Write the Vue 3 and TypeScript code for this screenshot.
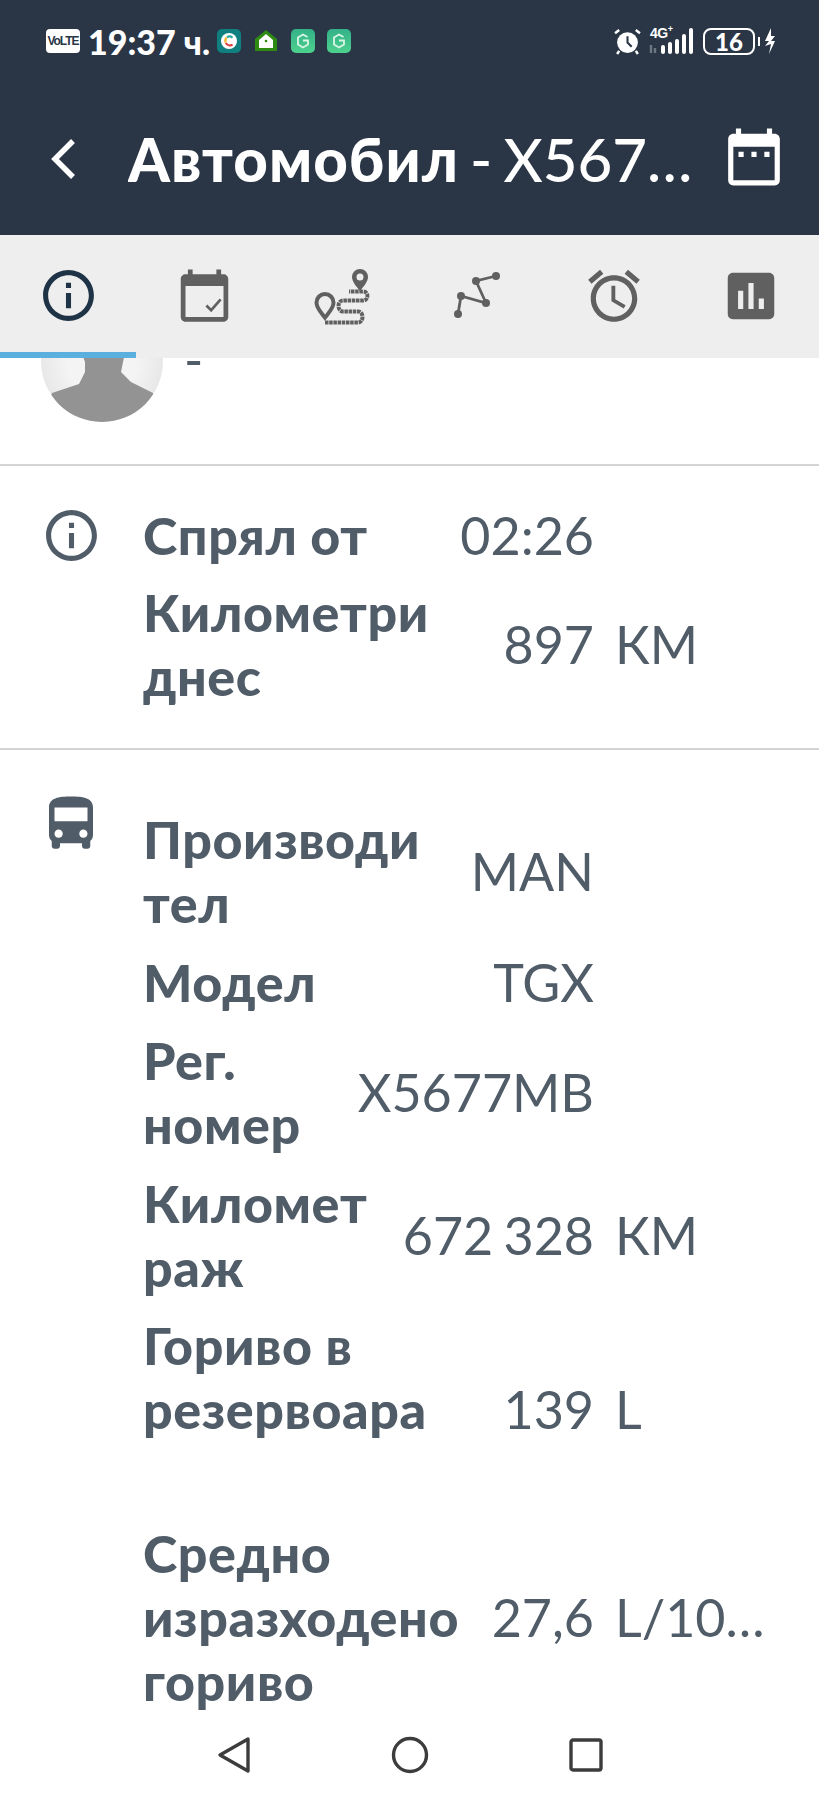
<script setup lang="ts">
type Row = { label: string[]; value: string; unit?: string; far?: boolean; low?: boolean }

const trip: Row[] = [
  { label: ['Спрял от'], value: '02:26' },
  { label: ['Километри', 'днес'], value: '897', unit: 'КМ' }
]

const vehicle: Row[] = [
  { label: ['Производи', 'тел'], value: 'MAN' },
  { label: ['Модел'], value: 'TGX' },
  { label: ['Рег.', 'номер'], value: 'X5677MB' },
  { label: ['Километ', 'раж'], value: '672 328', unit: 'КМ' },
  { label: ['Гориво в', 'резервоара'], value: '139', unit: 'L', low: true },
  { label: ['Средно', 'изразходено', 'гориво'], value: '27,6', unit: 'L/100km', far: true }
]

const sections = [
  { id: 'trip', rows: trip },
  { id: 'vehicle', rows: vehicle }
]
</script>

<template>
  <div class="page">
    <div class="statusbar">
      <span class="volte">VoLTE</span>
      <span class="time">19:37 ч.</span>
      <span class="app app-teal">
        <svg viewBox="0 0 24 24" width="24" height="24">
          <circle cx="12" cy="12" r="8" fill="#fff" />
          <path d="M15.5 8.6a5 5 0 0 0-5.5-.4" fill="none" stroke="#2aa9a0" stroke-width="2.2" />
          <path d="M9.6 8.6a5 5 0 0 0-1 5" fill="none" stroke="#f2b632" stroke-width="2.2" />
          <path d="M8.8 14a5 5 0 0 0 6.8 1.6" fill="none" stroke="#d8403f" stroke-width="2.2" />
        </svg>
      </span>
      <svg class="app-home" viewBox="0 0 24 24" width="24" height="24">
        <path d="M12 1 23 10v12H1V10z" fill="#2f8a12" />
        <path d="M12 5 19 11v8H5v-8z" fill="#fff" />
        <circle cx="12" cy="12" r="1.3" fill="#2f8a12" />
      </svg>
      <span class="app app-green">
        <svg viewBox="0 0 24 24" width="24" height="24">
          <path d="M16.5 8 12 5.500 7 8.500v7l5 3 5-3v-4h-5" fill="none" stroke="#d8f5e6" stroke-width="1.800" />
        </svg>
      </span>
      <span class="app app-green">
        <svg viewBox="0 0 24 24" width="24" height="24">
          <path d="M16.5 8 12 5.500 7 8.500v7l5 3 5-3v-4h-5" fill="none" stroke="#d8f5e6" stroke-width="1.800" />
        </svg>
      </span>
      <span class="grow"></span>
      <svg class="alarm" viewBox="0 0 26 26" width="27" height="27">
        <circle cx="13" cy="14" r="10" fill="#fff" />
        <path d="M13 8v6l4 4" fill="none" stroke="#2a3646" stroke-width="2" />
        <path d="M1 5l4-3M25 5l-4-3M5 22l-2 3M21 22l2 3" stroke="#fff" stroke-width="2.4" fill="none" />
      </svg>
      <span class="signal">
        <span class="net">4G<sup>+</sup></span>
        <svg viewBox="0 0 48 26" width="48" height="26">
          <path d="M4 17v8M8 20v5" stroke="#6d7883" stroke-width="2.4" fill="none" />
          <rect x="14" y="17" width="4" height="9" rx="2" fill="#fff" />
          <rect x="21" y="14" width="4" height="12" rx="2" fill="#fff" />
          <rect x="28" y="11" width="4" height="15" rx="2" fill="#fff" />
          <rect x="35" y="6" width="4" height="20" rx="2" fill="#fff" />
          <rect x="42" y="0" width="4" height="26" rx="2" fill="#fff" />
        </svg>
      </span>
      <span class="battery">16</span>
      <span class="nub"></span>
      <svg class="bolt" viewBox="0 0 12 26" width="12" height="26">
        <path d="M7 0 1 13h4l-4 5 6-2-2 10 6-13H7l4-5H7z" fill="#fff" />
      </svg>
    </div>

    <header class="appbar">
      <svg class="back" viewBox="0 0 26 42" width="26" height="42">
        <path d="M23 3 5 21l18 18" fill="none" stroke="#fff" stroke-width="5.5" />
      </svg>
      <h1 class="title"><span class="title-word">Автомобил</span> - X5677MB</h1>
      <svg class="cal" viewBox="0 0 24 24" width="62" height="62">
        <path fill="#fff" d="M20 3h-1V1h-2v2H7V1H5v2H4c-1.1 0-2 .9-2 2v16c0 1.1.9 2 2 2h16c1.1 0 2-.9 2-2V5c0-1.1-.9-2-2-2zm0 18H4V8h16v13z" />
        <path fill="#fff" d="M6 10h2v2H6zM11 10h2v2h-2zM16 10h2v2h-2z" />
      </svg>
    </header>

    <nav class="tabs">
      <div class="tab tab-active">
        <svg viewBox="0 0 24 24" width="61" height="61">
          <path d="M11 7h2v2h-2zm0 4h2v6h-2zm1-9C6.48 2 2 6.48 2 12s4.48 10 10 10 10-4.48 10-10S17.52 2 12 2zm0 18c-4.41 0-8-3.59-8-8s3.59-8 8-8 8 3.59 8 8-3.59 8-8 8z" />
        </svg>
      </div>
      <div class="tab">
        <svg viewBox="0 0 24 24" width="57" height="57">
          <path d="M20 3h-1V1h-2v2H7V1H5v2H4c-1.1 0-2 .9-2 2v16c0 1.1.9 2 2 2h16c1.1 0 2-.9 2-2V5c0-1.1-.9-2-2-2zm0 18H4V8h16v13z" />
          <path d="m12.8 16.2 2 2 4-4.6" fill="none" stroke="#606060" stroke-width="1.1" />
        </svg>
      </div>
      <div class="tab">
        <svg viewBox="0 0 61 61" width="61" height="61">
          <path fill-rule="evenodd" d="M49 4a8 8 0 0 0-8 8c0 5 5 10 8 14 3-4 8-9 8-14a8 8 0 0 0-8-8zm0 4.500a3.500 3.500 0 1 1 0 7 3.500 3.500 0 0 1 0-7zM14 27a10.500 10.500 0 0 0-10.500 10.500c0 6 6.500 13 10.500 18.500 4-5.500 10.500-12.500 10.500-18.500A10.500 10.500 0 0 0 14 27zm0 4a6.500 6.500 0 0 1 6.500 6.500c0 4-3.500 8-6.500 12-3-4-6.500-8-6.500-12a6.500 6.500 0 0 1 6.500-6.500z" />
          <path d="M14 57.500h33c6 0 6-11 0-11H32c-6 0-6-11 0-11h20c6 0 6-9 0-9H38" fill="none" stroke="#606060" stroke-width="4" stroke-dasharray="3.500 .7" />
        </svg>
      </div>
      <div class="tab">
        <svg viewBox="0 0 48 48" width="48" height="48">
          <path d="M4 42 7 24l25 7-10-22 20-5" fill="none" stroke="#606060" stroke-width="2.800" />
          <circle cx="4" cy="42" r="4" />
          <circle cx="7" cy="24" r="4" />
          <circle cx="32" cy="31" r="4" />
          <circle cx="22" cy="9" r="4" />
          <circle cx="42" cy="4" r="4" />
        </svg>
      </div>
      <div class="tab">
        <svg viewBox="0 0 24 24" width="62" height="62">
          <path d="M22 5.720l-4.600-3.860-1.290 1.530 4.600 3.860L22 5.720zM7.880 3.390L6.600 1.860 2 5.710l1.290 1.530 4.590-3.850zM12.500 8H11v6l4.750 2.850.75-1.230-4-2.370V8zM12 4c-4.970 0-9 4.030-9 9s4.030 9 9 9 9-4.030 9-9-4.030-9-9-9zm0 16c-3.870 0-7-3.130-7-7s3.130-7 7-7 7 3.130 7 7-3.130 7-7 7z" />
        </svg>
      </div>
      <div class="tab">
        <svg viewBox="0 0 24 24" width="62" height="62">
          <path d="M19 3H5c-1.100 0-2 .9-2 2v14c0 1.100.9 2 2 2h14c1.100 0 2-.9 2-2V5c0-1.100-.9-2-2-2zM9 17H7v-7h2v7zm4 0h-2V7h2v10zm4 0h-2v-4h2v4z" />
        </svg>
      </div>
      <span class="tab-ink"></span>
    </nav>

    <main class="content">
      <div class="driver">
        <div class="avatar">
          <svg viewBox="0 0 122 122" width="122" height="122">
            <path d="M36 40h51l-5 22-2 10 10 10 22 11 10 29H0l11-29 27-9 6-12v-10z" fill="#939393" />
          </svg>
        </div>
        <span class="driver-name">-</span>
      </div>

      <section v-for="section in sections" :key="section.id" :class="['section', 'section-' + section.id]">
        <div class="section-icon">
          <svg v-if="section.id === 'trip'" viewBox="0 0 24 24" width="61" height="61">
            <path d="M11 7h2v2h-2zm0 4h2v6h-2zm1-9C6.48 2 2 6.48 2 12s4.48 10 10 10 10-4.48 10-10S17.52 2 12 2zm0 18c-4.41 0-8-3.59-8-8s3.59-8 8-8 8 3.59 8 8-3.59 8-8 8z" />
          </svg>
          <svg v-else viewBox="0 0 24 24" width="66" height="66">
            <path d="M4 16c0 .88.39 1.670 1 2.220V20c0 .55.45 1 1 1h1c.55 0 1-.45 1-1v-1h8v1c0 .55.45 1 1 1h1c.55 0 1-.45 1-1v-1.780c.61-.55 1-1.340 1-2.220V6c0-3.500-3.580-4-8-4s-8 .5-8 4v10zm3.500 1c-.83 0-1.500-.67-1.500-1.500S6.670 14 7.500 14s1.500.67 1.500 1.500S8.330 17 7.500 17zm9 0c-.83 0-1.500-.67-1.500-1.500s.67-1.500 1.500-1.500 1.500.67 1.500 1.500-.67 1.500-1.500 1.500zm1.500-6H6V6h12v5z" />
          </svg>
        </div>
        <div class="rows">
          <div v-for="row in section.rows" :key="row.value" :class="['row', { 'row-far': row.far, 'row-low': row.low }]">
            <div class="label">
              <div v-for="line in row.label" :key="line">{{ line }}</div>
            </div>
            <div class="value">{{ row.value }}</div>
            <div class="unit">{{ row.unit }}</div>
          </div>
        </div>
      </section>
    </main>

    <footer class="navbar">
      <svg viewBox="0 0 34 38" width="34" height="38">
        <path d="M31 3 3 19l28 16z" fill="none" stroke="#3c3c3c" stroke-width="3.400" stroke-linejoin="round" />
      </svg>
      <svg viewBox="0 0 38 38" width="38" height="38">
        <circle cx="19" cy="19" r="16.500" fill="none" stroke="#3c3c3c" stroke-width="3.400" />
      </svg>
      <svg viewBox="0 0 34 34" width="34" height="34">
        <rect x="2" y="2" width="30" height="30" rx="2" fill="none" stroke="#3c3c3c" stroke-width="3.400" />
      </svg>
    </footer>
  </div>
</template>

<style>
body {
  margin: 0;
  background: #fff;
}
</style>

<style scoped>
.page {
  width: 819px;
  height: 1800px;
  display: flex;
  flex-direction: column;
  overflow: hidden;
  font-family: Lato, "Open Sans", "Noto Sans", sans-serif;
  color: #505c68;
  background: #fff;
}

.statusbar {
  height: 82px;
  flex: none;
  display: flex;
  align-items: center;
  padding: 0 43px 0 46px;
  background: #2a3646;
  color: #fff;
  box-sizing: border-box;
}

.volte {
  width: 34px;
  height: 24px;
  border-radius: 4px;
  background: #fff;
  color: #2a3646;
  font: 700 12px/24px "Liberation Sans", sans-serif;
  letter-spacing: -1px;
  text-align: center;
  overflow: hidden;
}

.time {
  margin-left: 8px;
  font-size: 34px;
  font-weight: 900;
  white-space: nowrap;
  width: 119px;
}

.app {
  width: 24px;
  height: 24px;
  border-radius: 5px;
  margin-left: 12px;
  display: block;
}

.app-teal {
  margin-left: 10px;
  background: #0f7f7f;
}

.app-green {
  background: linear-gradient(#33b189, #4dd18d);
}

.app-home {
  margin-left: 13px;
  margin-right: 1px;
}

.grow {
  flex: 1;
}

.signal {
  position: relative;
  margin-left: 6px;
  height: 26px;
  display: block;
}

.signal svg {
  display: block;
}

.net {
  position: absolute;
  left: 3px;
  top: -3px;
  font: 700 14px/16px "Liberation Sans", sans-serif;
  letter-spacing: -.5px;
}

.net sup {
  font-size: 9px;
  line-height: 0;
}

.battery {
  margin-left: 8px;
  width: 52px;
  height: 27px;
  box-sizing: border-box;
  border: 2px solid #fff;
  border-radius: 8px;
  font-size: 24px;
  line-height: 23px;
  font-weight: 900;
  text-align: center;
}

.nub {
  width: 2px;
  height: 9px;
  background: #fff;
  margin-left: 3px;
}

.bolt {
  margin-left: 4px;
}

.appbar {
  height: 153px;
  flex: none;
  display: flex;
  align-items: center;
  padding: 0 34px 0 50px;
  background: #2a3646;
  box-sizing: border-box;
}

.back {
  flex: none;
}

.title {
  flex: 1;
  min-width: 0;
  margin: 0 0 0 52px;
  color: #fff;
  font-size: 60px;
  font-weight: 500;
  word-spacing: -4px;
  white-space: nowrap;
  overflow: hidden;
  text-overflow: ellipsis;
}

.title-word {
  font-weight: 900;
  letter-spacing: 1px;
}

.cal {
  flex: none;
  margin: -4px 0 0 24px;
}

.tabs {
  position: relative;
  z-index: 1;
  height: 123px;
  flex: none;
  display: flex;
  background: #eee;
}

.tab {
  flex: 1;
  display: flex;
  align-items: center;
  justify-content: center;
  padding-bottom: 2px;
  fill: #606060;
}

.tab-active {
  fill: #1f3347;
}

.tab-ink {
  position: absolute;
  left: 0;
  bottom: 0;
  width: 136px;
  height: 6px;
  background: #5ab0dc;
}

.content {
  flex: 1;
  min-height: 0;
  overflow: hidden;
}

.driver {
  display: flex;
  gap: 21px;
  height: 106px;
  padding-left: 41px;
  align-items: flex-start;
}

.avatar {
  flex: none;
  width: 122px;
  height: 122px;
  margin-top: -58px;
  border-radius: 50%;
  overflow: hidden;
  background: radial-gradient(circle, #f4f4f4 40%, #dcdcdc 100%);
}

.avatar svg {
  display: block;
}

.driver-name {
  font-size: 52px;
  line-height: 2px;
}

.section {
  display: flex;
  border-top: 2px solid #d4d4d4;
  padding-top: 37px;
  padding-bottom: 40px;
}

.section-vehicle {
  padding-top: 57px;
}

.section-icon {
  flex: none;
  width: 143px;
  box-sizing: border-box;
  padding-left: 41px;
  fill: #505c68;
}

.section-trip .section-icon {
  padding-top: 2px;
}

.section-vehicle .section-icon {
  padding-left: 38px;
  margin-top: -16px;
}

.rows {
  flex: 1;
  min-width: 0;
  display: flex;
  flex-direction: column;
  gap: 14.5px;
  padding-right: 54px;
}

.section-trip .rows {
  gap: 13px;
}

.row {
  display: flex;
  align-items: center;
  font-size: 52px;
  line-height: 64px;
}

.row-far {
  margin-top: 65px;
}

.row-low {
  align-items: flex-end;
}

.label {
  flex: 1;
  font-weight: 900;
  letter-spacing: .6px;
  white-space: nowrap;
}

.value {
  white-space: nowrap;
  word-spacing: -3px;
}

.unit {
  flex: none;
  width: 150px;
  margin-left: 21px;
  white-space: nowrap;
  overflow: hidden;
  text-overflow: ellipsis;
}

.navbar {
  height: 90px;
  flex: none;
  display: flex;
  align-items: center;
  background: #fff;
  padding: 0 216px 0 217px;
  justify-content: space-between;
  box-sizing: border-box;
}
</style>
